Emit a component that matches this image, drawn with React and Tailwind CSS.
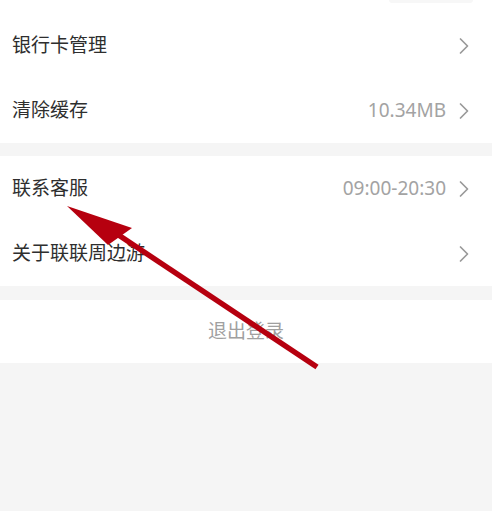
import { ChevronRight } from 'lucide-react';

const font = { fontFamily: '"Noto Sans", "Noto Sans CJK SC", sans-serif' };

function Row({ label, value }) {
  return (
    <div className="flex h-[65px] items-center justify-between pl-[12px] pr-[14px]">
      <span className="text-[19px] text-[#2e2e2e]">{label}</span>
      <div className="flex items-center gap-[4px]">
        {value && <span className="text-[19px] text-[#a3a3a3]">{value}</span>}
        <ChevronRight size={28} strokeWidth={1.5} className="text-[#9a9a9a]" />
      </div>
    </div>
  );
}

export default function App() {
  return (
    <div className="relative h-[511px] w-[492px] overflow-hidden bg-[#f5f5f5]" style={font}>
      <div className="bg-white">
        <div className="flex h-[13px] justify-end pr-[19px]">
          <div className="h-[3px] w-[84px] rounded-b bg-[#f7f7f7]" />
        </div>
        <Row label="银行卡管理" />
        <Row label="清除缓存" value="10.34MB" />
      </div>
      <div className="mt-[13px] bg-white">
        <Row label="联系客服" value="09:00-20:30" />
        <Row label="关于联联周边游" />
      </div>
      <div className="mt-[14px] flex h-[63px] items-center justify-center bg-white">
        <span className="text-[19px] text-[#a0a0a0]">退出登录</span>
      </div>

      {/* annotation arrow */}
      <svg className="absolute left-0 top-0" width="492" height="511" viewBox="0 0 492 511">
        <line x1="114" y1="232" x2="317" y2="367" stroke="#b6000f" strokeWidth="5.5" />
        <polygon points="67,206 132,228 108,245" fill="#b6000f" />
      </svg>
    </div>
  );
}
